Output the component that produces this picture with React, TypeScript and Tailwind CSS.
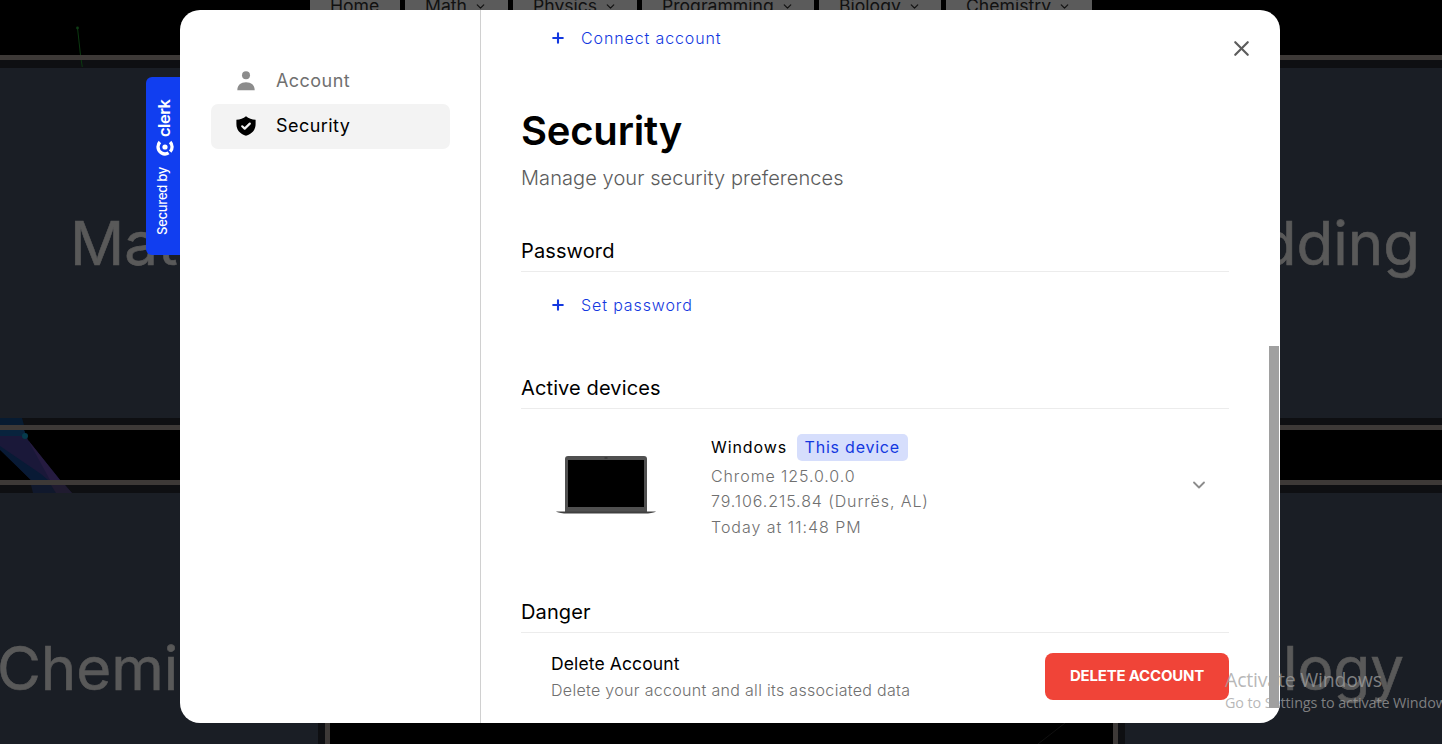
import { ChevronDown, X } from "lucide-react";
import type { ReactNode } from "react";

const tabs = [
  { label: "Home", width: "w-[90px]", menu: false },
  { label: "Math", width: "w-[103px]", menu: true },
  { label: "Physics", width: "w-[124px]", menu: true },
  { label: "Programming", width: "w-[172px]", menu: true },
  { label: "Biology", width: "w-[122px]", menu: true },
  { label: "Chemistry", width: "w-[146px]", menu: true },
];

function Tile({ children, side, className = "" }: { children: ReactNode; side: "left" | "right"; className?: string }) {
  return (
    <div
      className={
        "flex shrink-0 border-[#3d3937] bg-[#0e0f12] " +
        (side === "left"
          ? "w-[330px] border-y-[5px] border-r-[5px] pr-[7px] "
          : "w-[329px] border-y-[5px] border-l-[5px] pl-[7px] ") +
        className
      }
    >
      <div
        className={
          "flex flex-1 items-start overflow-hidden whitespace-nowrap bg-[#1a1e25] text-[60px] leading-[72px] text-[#595959] [-webkit-text-stroke:0.6px_#595959] " +
          (side === "left" ? "justify-start" : "justify-end")
        }
      >
        {children}
      </div>
    </div>
  );
}

function Backdrop() {
  return (
    <div className="relative flex h-[744px] w-[1442px] flex-col overflow-hidden bg-black">
      <nav className="flex h-[55px] shrink-0 items-start gap-[5px] pl-[310px]">
        {tabs.map((t) => (
          <div
            key={t.label}
            className={"flex h-[26px] shrink-0 items-start gap-[7px] bg-[#5b5b5b] pl-5 text-[17.6px] text-[#111] " + t.width}
          >
            <span className="-mt-[5px] leading-[22px]">{t.label}</span>
            {t.menu && <ChevronDown className="size-[13px]" strokeWidth={2.2} />}
          </div>
        ))}
      </nav>
      <div className="flex h-[375px] shrink-0 justify-between">
        <Tile side="left" className="pt-2 pb-[7px]">
          <span className="pt-[139px] pl-[70px]">Mathematics</span>
        </Tile>
        <Tile side="right" className="pt-2 pb-[7px]">
          <span className="pt-[139px] pr-[22px]">Embedding</span>
        </Tile>
      </div>
      <div className="h-[50px] shrink-0" />
      <div className="flex h-[375px] shrink-0 justify-between">
        <Tile side="left" className="pt-2">
          <span className="pt-[139px] -ml-[3px]">Chemistry</span>
        </Tile>
        <Tile side="right" className="pt-2">
          <span className="pt-[139px] pr-[38px]">Biology</span>
        </Tile>
      </div>
      <svg className="absolute left-0 top-0" width="1442" height="744" viewBox="0 0 1442 744">
        <path d="M77.5 28L80.5 55M81.2 60L82.3 67" stroke="#0b3a10" strokeWidth="1" />
        <circle cx="77.5" cy="28" r="1.4" fill="#0f3d15" />
        <path d="M0 418H22L24 425H0Z" fill="#071b31" />
        <path d="M0 430H24L28 440L60 480H31L0 449Z" fill="#1a1839" />
        <path d="M0 430H24L26 436H0Z" fill="#08233d" />
        <path d="M0 446L41 474L48 480H31L0 450Z" fill="#081a35" />
        <path d="M28 440L60 480H50Z" fill="#251b40" />
        <path d="M31 485H65L72 493H33Z" fill="#10182c" />
        <path d="M51 485H65L72 493H56Z" fill="#201b30" />
        <circle cx="25" cy="436" r="3" fill="#063a4c" />
        <path d="M1038 744L1065 723" stroke="#101010" strokeWidth="1" />
      </svg>
    </div>
  );
}

function ClerkMark() {
  return (
    <svg className="mt-[3px]" width="16" height="18" viewBox="0 0 16 18" fill="none" strokeWidth="3.3">
      <circle cx="9" cy="9" r="2.6" fill="#fff" />
      <path d="M14 3.9A7 7 0 0 0 9 2A7 7 0 0 0 3.1 12.6" stroke="#fff" />
      <path d="M4.3 14.2A7 7 0 0 0 14 14.1" stroke="#fff" />
    </svg>
  );
}

function SecuredBy() {
  return (
    <div className="absolute top-[67px] -left-[34px] flex h-[178px] w-[34px] items-center justify-center rounded-l-[6px] bg-[#113ef0]">
      <div className="flex h-[34px] w-[178px] shrink-0 -rotate-90 items-center pl-5 text-white">
        <span className="-mt-px w-[79px] text-[13px] font-medium leading-none tracking-[-0.25px]">Secured by</span>
        <ClerkMark />
        <span className="mt-[2px] pl-[3px] text-[16.5px] font-semibold leading-none tracking-[-0.5px]">clerk</span>
      </div>
    </div>
  );
}

function AddAction({ children }: { children: ReactNode }) {
  return (
    <button className="flex h-6 items-center gap-[17px] pl-[31px] text-[16px] font-light tracking-[0.88px] text-[#1338e0]">
      <svg className="-mt-px" width="12" height="12" viewBox="0 0 12 12" fill="none" stroke="currentColor" strokeWidth="2.1" strokeLinecap="round">
        <path d="M6 1.2V10.8M1.2 6H10.8" />
      </svg>
      {children}
    </button>
  );
}

function SectionTitle({ children }: { children: ReactNode }) {
  return (
    <h2 className="h-[35px] border-b border-[#ececec] text-[20px] leading-7 tracking-[0.12px] text-black">{children}</h2>
  );
}

function Laptop() {
  return (
    <svg width="100" height="60" viewBox="0 0 100 60">
      <path d="M9 58V4Q9 1 12 1H88Q91 1 91 4V58Z" fill="#505050" />
      <rect x="12" y="5" width="76" height="47" fill="#000" />
      <rect x="48.5" y="2.5" width="3" height="1" fill="#2c2c2c" />
      <path d="M0 56.5H100Q99 57.6 92 58.5H8Q1 57.6 0 56.5Z" fill="#404040" />
    </svg>
  );
}

function Sidebar() {
  return (
    <aside className="w-[301px] shrink-0 border-r border-[#d0d0d0] pt-[49px] pl-[31px]">
      <div className="flex h-[45px] w-[239px] items-center pb-[2px] pl-[25px] text-[18px] tracking-[0.45px] text-[#707070]">
        <svg width="20" height="20" viewBox="0 0 20 20" fill="#8c8c8c">
          <circle cx="10" cy="4.3" r="4" />
          <path d="M1.3 19.2C1.3 14 4.8 11.2 10 11.2S18.7 14 18.7 19.2Z" />
        </svg>
        <span className="pl-5">Account</span>
      </div>
      <div className="flex h-[45px] w-[239px] items-center rounded-[7px] bg-[#f3f3f3] pb-[2px] pl-[25px] text-[18px] tracking-[0.45px] text-black">
        <svg width="20" height="20" viewBox="0 0 20 20">
          <path d="M10 .2Q14 3.5 19.6 3.8V8C19.6 14 16 18 10 19.8C4 18 .4 14 .4 8V3.8Q6 3.5 10 .2Z" fill="#000" />
          <path d="M6.2 10.3L8.7 12.6L13.8 7.6" fill="none" stroke="#f3f3f3" strokeWidth="2.2" strokeLinecap="round" strokeLinejoin="round" />
        </svg>
        <span className="pl-5">Security</span>
      </div>
    </aside>
  );
}

function Content() {
  return (
    <main className="flex w-[748px] flex-col pt-4 pl-10">
      <AddAction>Connect account</AddAction>
      <h1 className="mt-[57px] text-[40px] font-semibold leading-[48px] tracking-[-0.2px] text-black">Security</h1>
      <p className="mt-[9px] text-[20px] font-light leading-7 tracking-[0.08px] text-[#5c5c5c]">
        Manage your security preferences
      </p>

      <section className="mt-[45px]">
        <SectionTitle>Password</SectionTitle>
        <div className="pt-[21px]">
          <AddAction>Set password</AddAction>
        </div>
      </section>

      <section className="mt-[57px]">
        <SectionTitle>Active devices</SectionTitle>
        <div className="flex h-[131px] pt-[25px] pl-[35px]">
          <div className="mt-[21px] w-[155px]">
            <Laptop />
          </div>
          <div className="flex-1 text-[16px] font-light tracking-[0.9px] text-[#707070]">
            <div className="flex h-[27px] items-center gap-[10px]">
              <span className="-mt-px font-normal text-black">Windows</span>
              <span className="flex h-[27px] items-center rounded-[5px] bg-[#d6defc] pr-[8px] pb-px pl-[7.5px] font-normal tracking-[0.78px] text-[#1338e0]">
                This device
              </span>
            </div>
            <div className="mt-[3px]">
              <p className="leading-[25px]">Chrome 125.0.0.0</p>
              <p className="leading-[25px]">79.106.215.84 (Durrës, AL)</p>
              <p className="leading-[27px] tracking-[0.98px]">Today at 11:48 PM</p>
            </div>
          </div>
          <ChevronDown className="mt-[41px] mr-[20px] size-5 text-[#8c8c8c]" strokeWidth={2.2} />
        </div>
      </section>

      <section className="mt-[58px]">
        <SectionTitle>Danger</SectionTitle>
        <div className="flex items-start justify-between pt-5 pl-[30px]">
          <div>
            <p className="text-[17.5px] leading-[22px] tracking-[0.12px] text-black">Delete Account</p>
            <p className="mt-1 text-[16px] font-light leading-[22px] tracking-[0.31px] text-[#707070]">
              Delete your account and all its associated data
            </p>
          </div>
          <button className="h-[47px] w-[184px] rounded-[8px] bg-[#f04438] text-[15px] font-bold tracking-[-0.2px] text-white">
            DELETE ACCOUNT
          </button>
        </div>
      </section>
    </main>
  );
}

export default function App() {
  return (
    <div className="relative h-[744px] w-[1442px] overflow-hidden bg-black font-[Inter,sans-serif]">
      <Backdrop />
      <div className="absolute top-[10px] left-[180px] h-[713px] w-[1100px]">
        <SecuredBy />
        <div className="relative flex h-full w-full overflow-hidden rounded-[20px] bg-white">
          <Sidebar />
          <Content />
          <button className="absolute top-[26px] right-[26px]" aria-label="Close">
            <X className="size-[25px] text-[#5c5c5c]" strokeWidth={2.1} />
          </button>
          <div className="absolute top-[336px] right-px h-[362px] w-[10px] bg-[#a0a0a0]" />
        </div>
      </div>
      <div className="absolute top-[667px] left-[1225px] whitespace-nowrap font-['Open_Sans',sans-serif] text-[#a0a0a0]/75">
        <p className="text-[19.5px] leading-[26px] tracking-[-0.2px]">Activate Windows</p>
        <p className="text-[14.4px] leading-5 tracking-[-0.1px]">Go to Settings to activate Windows.</p>
      </div>
    </div>
  );
}
